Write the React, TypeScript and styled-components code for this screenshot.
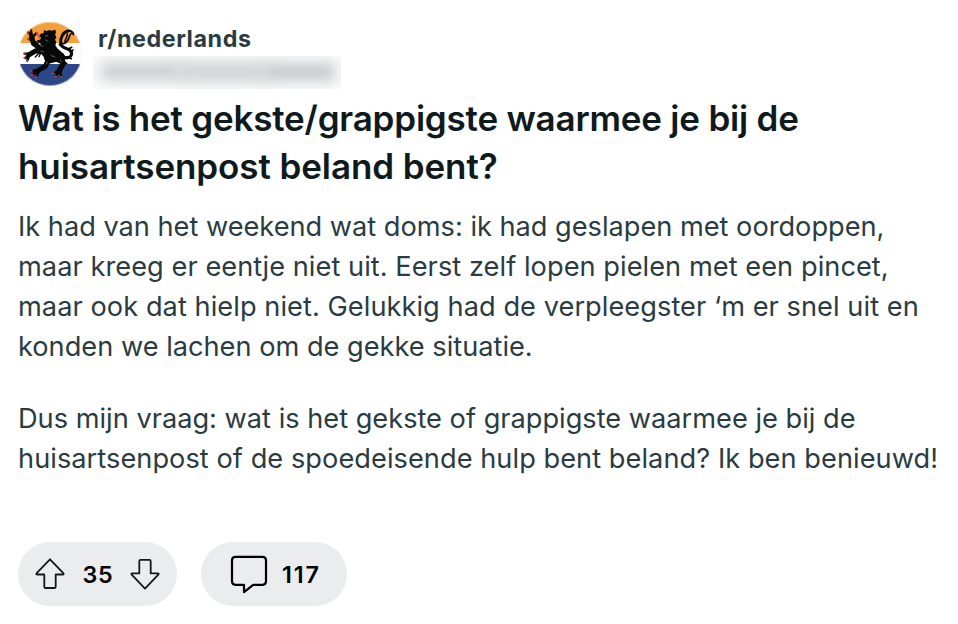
import React from "react";
import styled, { createGlobalStyle } from "styled-components";

const GlobalStyle = createGlobalStyle`
  *, *::before, *::after { box-sizing: border-box; }
  body {
    margin: 0;
    background: #ffffff;
    font-family: Inter, "Liberation Sans", sans-serif;
  }
`;

const Post = styled.article`
  display: flex;
  flex-direction: column;
  width: 958px;
  height: 624px;
  padding: 22px 18px 18px;
  overflow: hidden;
`;

const Header = styled.header`
  display: flex;
  height: 67px;
`;

const AvatarIcon = styled.svg`
  flex: none;
  width: 64px;
  height: 64px;
`;

const Byline = styled.div`
  display: flex;
  flex-direction: column;
  margin-left: 11px;
`;

const Subreddit = styled.span`
  height: 34px;
  padding-left: 5px;
  color: #2a3c42;
  font-size: 23.3px;
  font-weight: 650;
  line-height: 34px;
  letter-spacing: 0.57px;
  white-space: nowrap;
`;

const HiddenAuthor = styled.div`
  display: flex;
  align-items: center;
  width: 248px;
  height: 33px;
  padding: 0 8px 2px;
  overflow: hidden;
  background: #fafbfb;
`;

const AuthorSmudge = styled.div<{ $width: number; $height: number; $color: string }>`
  width: ${({ $width }) => $width}px;
  height: ${({ $height }) => $height}px;
  margin-right: -4px;
  background: ${({ $color }) => $color};
  filter: blur(7px);
`;

const Title = styled.h1`
  margin: 5px 0 0;
  color: #0f1a1c;
  font-size: 35px;
  font-weight: 600;
  line-height: 48px;
`;

const Body = styled.div`
  display: flex;
  flex-direction: column;
  gap: 32px;
  margin-top: 17px;
  color: #2a3c42;
  font-size: 27.2px;
  line-height: 40px;
`;

const Paragraph = styled.p`
  margin: 0;
`;

const Line = styled.span<{ $tracking: number }>`
  display: block;
  white-space: nowrap;
  letter-spacing: ${({ $tracking }) => $tracking}px;
`;

const Actions = styled.footer`
  display: flex;
  gap: 24px;
  margin-top: auto;
`;

const Pill = styled.div<{ $width: number; $inset: number }>`
  display: flex;
  align-items: center;
  width: ${({ $width }) => $width}px;
  height: 64px;
  padding-left: ${({ $inset }) => $inset}px;
  border-radius: 32px;
  background: #ebeced;
`;

const Count = styled.span<{ $width: number; $tracking: number }>`
  width: ${({ $width }) => $width}px;
  padding-top: 2px;
  color: #000000;
  font-size: 23.3px;
  font-weight: 600;
  line-height: 32px;
  letter-spacing: ${({ $tracking }) => $tracking}px;
  text-align: center;
`;

const ActionIcon = styled.svg<{ $size: number }>`
  flex: none;
  width: ${({ $size }) => $size}px;
  height: ${({ $size }) => $size}px;
  fill: none;
  stroke-linejoin: round;
`;

function Avatar() {
  return (
    <AvatarIcon viewBox="24 24 192 192" aria-hidden="true">
      <defs>
        <clipPath id="avatar-circle">
          <circle cx="120" cy="120" r="96" />
        </clipPath>
      </defs>
      <g clipPath="url(#avatar-circle)">
        <path fill="#fff" d="M24 24h192v192H24z" />
        <path fill="#f4a03c" d="M24 24h192v63H24z" />
        <path fill="#2c4789" d="M24 150h192v66H24z" />
        <circle cx="120" cy="120" r="95" fill="none" stroke="#f6e3cc" strokeWidth="2" />
        <path
          fill="#080808"
          d="M92 59l9-2 1-10 7 5 9-4 6 2 12-3 2 9-3 5 4 9-4 7 4 8-3 8 5 9 9 8 11 9 5 11-2 13-10 7-12-5-12-4-7 4-11-1-8-5-3-11-7-8-2-10 4-9-4-12-9-4-2-6 8-2 5-6-7-4z"
        />
        <g fill="none" stroke="#080808" strokeLinecap="round" strokeLinejoin="round">
          <path strokeWidth="15" d="M101 97l-14 3-17-12-5-21" />
          <path strokeWidth="15" d="M104 111l-16 2-10-3-22 13" />
          <path strokeWidth="15" d="M135 137l-21 5-8 15-23 13" />
          <path strokeWidth="16" d="M151 132l9 16-9 16-4 9" />
          <path strokeWidth="7" d="M66 68l-11-13M65 62l-2-14M72 65l7-8M67 78l-11-3M60 119l-16 0M58 123l-12 9M58 124l-6 16M88 167l-22 4M83 172l-17 10M87 172l-8 15M148 170l-18 8M149 173l-12 13M151 172l3 15" />
          <path strokeWidth="9" d="M158 125c10 12 26 6 27-7 0-16-31-13-33-28-2-18 7-36 22-39" />
          <path strokeWidth="6" d="M174 51c10-2 17 2 16 10" />
          <path strokeWidth="5" d="M155 87c7 6 17-3 21-13 3-8 3-14 11-19M165 104c-5-8-13-7-17-13M174 106l11-6M181 116l8-8M171 128l13 6M172 60c1 11-8 15-7 24" />
          <path strokeWidth="4" d="M84 120l-8 9M91 119l-4 9M74 81l11 6M109 139l-6 12M164 143l7 6" />
        </g>
        <path
          fill="none"
          stroke="#aeb1b2"
          strokeWidth="1.5"
          d="M105 67l9-3M105 77l10 6M90 95l10 2M91 112l11 2M122 124l14 6M150 137l5 8M113 143l-6 9"
        />
        <path
          fill="none"
          stroke="#e14b43"
          strokeWidth="5"
          strokeLinecap="round"
          d="M81 63l7 1m-2-2 1 9M54 53l1 1M62 46l0 1M79 56l1-1M55 74l1 1M42 118l2 0M42 131l3-1M51 142l1-1M63 171l3 0M65 183l2-1M78 190l1-1M128 178l3 0M136 188l2-1M154 188l0 1"
        />
      </g>
    </AvatarIcon>
  );
}

const titleLines = [
  { text: "Wat is het gekste/grappigste waarmee je bij de", tracking: -0.2 },
  { text: "huisartsenpost beland bent?", tracking: -0.09 },
];

const paragraphs = [
  [
    { text: "Ik had van het weekend wat doms: ik had geslapen met oordoppen,", tracking: -0.01 },
    { text: "maar kreeg er eentje niet uit. Eerst zelf lopen pielen met een pincet,", tracking: 0.05 },
    { text: "maar ook dat hielp niet. Gelukkig had de verpleegster ‘m er snel uit en", tracking: 0.055 },
    { text: "konden we lachen om de gekke situatie.", tracking: 0 },
  ],
  [
    { text: "Dus mijn vraag: wat is het gekste of grappigste waarmee je bij de", tracking: 0 },
    { text: "huisartsenpost of de spoedeisende hulp bent beland? Ik ben benieuwd!", tracking: 0.05 },
  ],
];

export default function App() {
  return (
    <>
      <GlobalStyle />
      <Post>
        <Header>
          <Avatar />
          <Byline>
            <Subreddit>r/nederlands</Subreddit>
            <HiddenAuthor>
              <AuthorSmudge $width={80} $height={17} $color="#c8cbcd" />
              <AuthorSmudge $width={92} $height={20} $color="#d0d3d4" />
              <AuthorSmudge $width={70} $height={18} $color="#c5c9cb" />
            </HiddenAuthor>
          </Byline>
        </Header>
        <Title>
          {titleLines.map(({ text, tracking }) => (
            <Line key={text} $tracking={tracking}>{text}</Line>
          ))}
        </Title>
        <Body>
          {paragraphs.map((lines) => (
            <Paragraph key={lines[0].text}>
              {lines.map(({ text, tracking }) => (
                <Line key={text} $tracking={tracking}>{text}</Line>
              ))}
            </Paragraph>
          ))}
        </Body>
        <Actions>
          <Pill $width={159} $inset={16}>
            <ActionIcon $size={32} viewBox="0 0 32 32" stroke="#0f1a1c" strokeWidth="1.8">
              <path d="M16 1.3 2.7 15.2q-1 1.3.6 1.3H10.300V28.7q0 1.3 1.3 1.3h8.800q1.3 0 1.3-1.3V16.5h7q1.6 0 .6-1.3z" />
            </ActionIcon>
            <Count $width={64} $tracking={0.8}>35</Count>
            <ActionIcon $size={32} viewBox="0 0 32 32" stroke="#0f1a1c" strokeWidth="1.8">
              <path d="M15 30.600 1.700 16.700q-1-1.300.6-1.300H9.300V3.200q0-1.300 1.300-1.300h8.800q1.300 0 1.300 1.300v12.200h7q1.600 0 .6 1.300z" />
            </ActionIcon>
          </Pill>
          <Pill $width={146} $inset={28}>
            <ActionIcon $size={40} viewBox="0 0 40 40" stroke="#000" strokeWidth="2.2">
              <path d="M6.500 2.800h27q3.500 0 3.500 3.500v21q0 3.500-3.500 3.500h-9.300L15 38.100v-7.300H6.500Q3 30.800 3 27.300V6.300q0-3.500 3.500-3.500z" />
            </ActionIcon>
            <Count $width={65} $tracking={2}>117</Count>
          </Pill>
        </Actions>
      </Post>
    </>
  );
}
